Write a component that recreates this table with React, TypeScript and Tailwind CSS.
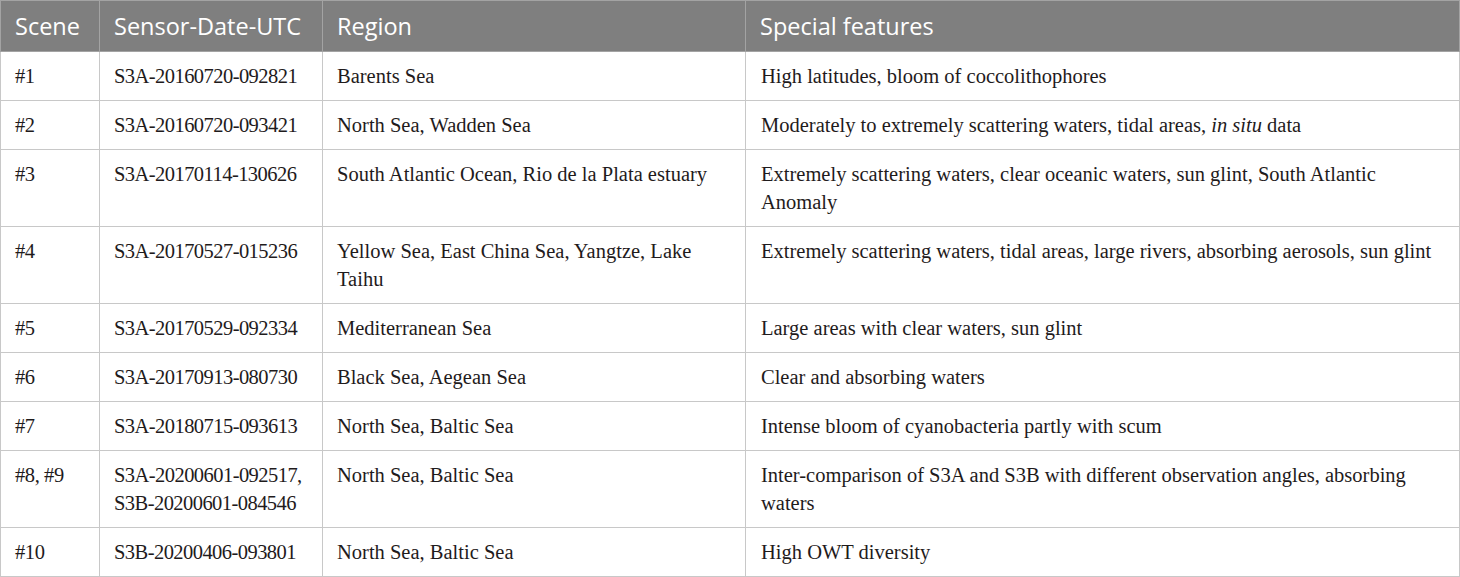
import React from "react";

const rows: { scene: string; sensor: React.ReactNode; region: string; features: React.ReactNode }[] = [
  { scene: "#1", sensor: "S3A-20160720-092821", region: "Barents Sea", features: "High latitudes, bloom of coccolithophores" },
  {
    scene: "#2",
    sensor: "S3A-20160720-093421",
    region: "North Sea, Wadden Sea",
    features: (
      <>
        Moderately to extremely scattering waters, tidal areas, <i>in situ</i> data
      </>
    ),
  },
  {
    scene: "#3",
    sensor: "S3A-20170114-130626",
    region: "South Atlantic Ocean, Rio de la Plata estuary",
    features: "Extremely scattering waters, clear oceanic waters, sun glint, South Atlantic Anomaly",
  },
  {
    scene: "#4",
    sensor: "S3A-20170527-015236",
    region: "Yellow Sea, East China Sea, Yangtze, Lake Taihu",
    features: "Extremely scattering waters, tidal areas, large rivers, absorbing aerosols, sun glint",
  },
  { scene: "#5", sensor: "S3A-20170529-092334", region: "Mediterranean Sea", features: "Large areas with clear waters, sun glint" },
  { scene: "#6", sensor: "S3A-20170913-080730", region: "Black Sea, Aegean Sea", features: "Clear and absorbing waters" },
  { scene: "#7", sensor: "S3A-20180715-093613", region: "North Sea, Baltic Sea", features: "Intense bloom of cyanobacteria partly with scum" },
  {
    scene: "#8, #9",
    sensor: (
      <>
        S3A-20200601-092517,
        <br />
        S3B-20200601-084546
      </>
    ),
    region: "North Sea, Baltic Sea",
    features: "Inter-comparison of S3A and S3B with different observation angles, absorbing waters",
  },
  { scene: "#10", sensor: "S3B-20200406-093801", region: "North Sea, Baltic Sea", features: "High OWT diversity" },
];

const headers = ["Scene", "Sensor-Date-UTC", "Region", "Special features"];

export default function App() {
  return (
    <div className="w-[1460px] bg-white">
      <table className="w-full table-fixed border-collapse border border-[#a9a9a9]">
        <colgroup>
          <col className="w-[99px]" />
          <col className="w-[223px]" />
          <col className="w-[423px]" />
          <col />
        </colgroup>
        <thead>
          <tr className="bg-[#7f7f7f]">
            {headers.map((h) => (
              <th
                key={h}
                className="border border-[#a3a3a3] px-[14px] py-[10px] text-left align-middle font-normal text-white text-[23.5px] leading-[30px] font-['Open_Sans',sans-serif]"
              >
                {h}
              </th>
            ))}
          </tr>
        </thead>
        <tbody className="font-['Liberation_Serif',serif] text-[20.5px] leading-[28px] text-[#1f1b1c]">
          {rows.map((r) => (
            <tr key={r.scene}>
              <td className="border border-[#c8c8c8] px-[14px] py-[10px] align-top tracking-[-0.02em]">{r.scene}</td>
              <td className="border border-[#c8c8c8] px-[14px] py-[10px] align-top tracking-[-0.027em]">{r.sensor}</td>
              <td className="border border-[#c8c8c8] px-[14px] py-[10px] align-top">{r.region}</td>
              <td className="border border-[#c8c8c8] pl-[15px] pr-[14px] py-[10px] align-top">{r.features}</td>
            </tr>
          ))}
        </tbody>
      </table>
    </div>
  );
}
